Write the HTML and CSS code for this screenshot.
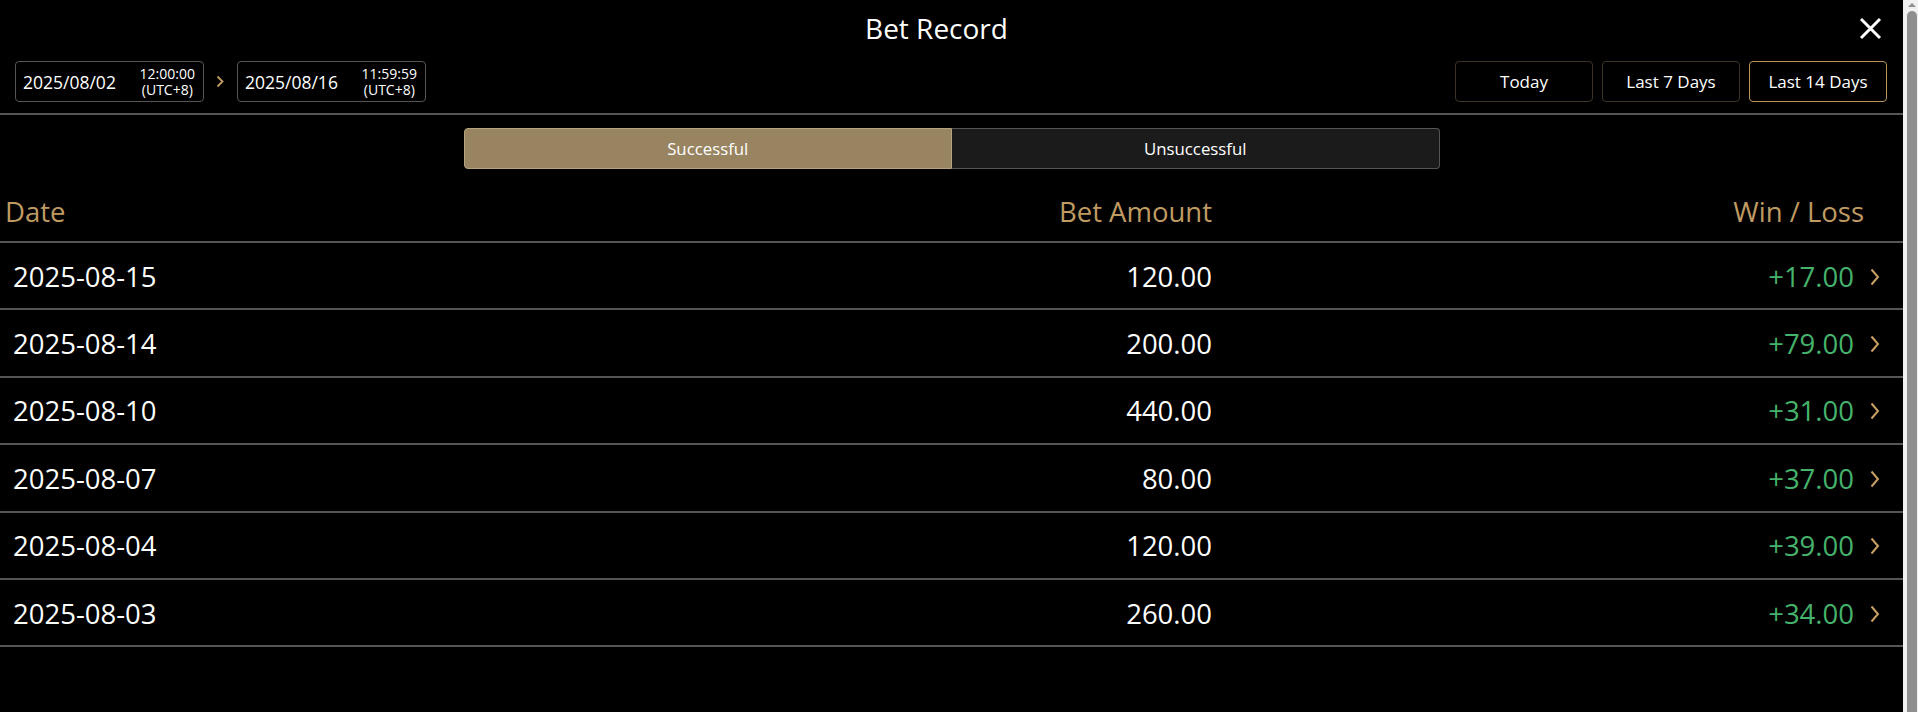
FILE: index.html
```html
<html>
    <head>
        <link rel="stylesheet" href="styles.css">
    </head>
    <body>
        <div class="page">
            <div class="main">
                <div class="titlebar">
                    <div class="title">Bet Record</div>
                    <div class="close">
                        <svg width="23" height="23" viewBox="0 0 23 23">
                            <path d="M2 2 L21 21 M21 2 L2 21" stroke="#fff" stroke-width="3" fill="none"/>
                        </svg>
                    </div>
                </div>

                <div class="filters">
                    <div class="range">
                        <div class="datebox">
                            <span class="day">2025/08/02</span>
                            <span class="time">12:00:00<br>(UTC+8)</span>
                        </div>
                        <svg class="arrow" width="8" height="13" viewBox="0 0 8 13">
                            <path d="M1.5 1.5 L6.5 6.5 L1.5 11.5" stroke="#c29d61" stroke-width="1.8" fill="none"/>
                        </svg>
                        <div class="datebox">
                            <span class="day">2025/08/16</span>
                            <span class="time">11:59:59<br>(UTC+8)</span>
                        </div>
                    </div>
                    <div class="quick">
                        <div class="quick-btn">Today</div>
                        <div class="quick-btn">Last 7 Days</div>
                        <div class="quick-btn active">Last 14 Days</div>
                    </div>
                </div>

                <div class="tabs">
                    <div class="tab selected">Successful</div>
                    <div class="tab">Unsuccessful</div>
                </div>

                <div class="table">
                    <div class="row head">
                        <div>Date</div>
                        <div class="num">Bet Amount</div>
                        <div class="num head-wl">Win / Loss</div>
                    </div>
                    <div class="row">
                        <div>2025-08-15</div>
                        <div class="num">120.00</div>
                        <div class="wl"><span class="win">+17.00</span><svg class="chev" width="10" height="18" viewBox="0 0 10 18"><path d="M1.5 1.5 L8 9 L1.5 16.5" stroke="#c9a063" stroke-width="2" fill="none"/></svg></div>
                    </div>
                    <div class="row">
                        <div>2025-08-14</div>
                        <div class="num">200.00</div>
                        <div class="wl"><span class="win">+79.00</span><svg class="chev" width="10" height="18" viewBox="0 0 10 18"><path d="M1.5 1.5 L8 9 L1.5 16.5" stroke="#c9a063" stroke-width="2" fill="none"/></svg></div>
                    </div>
                    <div class="row">
                        <div>2025-08-10</div>
                        <div class="num">440.00</div>
                        <div class="wl"><span class="win">+31.00</span><svg class="chev" width="10" height="18" viewBox="0 0 10 18"><path d="M1.5 1.5 L8 9 L1.5 16.5" stroke="#c9a063" stroke-width="2" fill="none"/></svg></div>
                    </div>
                    <div class="row">
                        <div>2025-08-07</div>
                        <div class="num">80.00</div>
                        <div class="wl"><span class="win">+37.00</span><svg class="chev" width="10" height="18" viewBox="0 0 10 18"><path d="M1.5 1.5 L8 9 L1.5 16.5" stroke="#c9a063" stroke-width="2" fill="none"/></svg></div>
                    </div>
                    <div class="row">
                        <div>2025-08-04</div>
                        <div class="num">120.00</div>
                        <div class="wl"><span class="win">+39.00</span><svg class="chev" width="10" height="18" viewBox="0 0 10 18"><path d="M1.5 1.5 L8 9 L1.5 16.5" stroke="#c9a063" stroke-width="2" fill="none"/></svg></div>
                    </div>
                    <div class="row">
                        <div>2025-08-03</div>
                        <div class="num">260.00</div>
                        <div class="wl"><span class="win">+34.00</span><svg class="chev" width="10" height="18" viewBox="0 0 10 18"><path d="M1.5 1.5 L8 9 L1.5 16.5" stroke="#c9a063" stroke-width="2" fill="none"/></svg></div>
                    </div>
                </div>
            </div>

            <div class="scrollbar">
                <div class="scroll-up"></div>
                <div class="scroll-thumb"></div>
            </div>
        </div>
    </body>
</html>
```

FILE: styles.css
```css
body {
    background: #000;
    color: #fff;
    font-family: "Open Sans", "Noto Sans", sans-serif;
    margin: 0;
    overflow: hidden;
}
.page {
    display: flex;
    height: 712px;
}
.main {
    flex: 1;
    min-width: 0;
}

/* title */
.titlebar {
    display: flex;
        align-items: center;
    height: 56px;
    padding: 0 21px 0 14px;
}
.title {
    flex: 1;
    font-size: 28px;
    text-align: center;
}
.close {
    display: flex;
}

/* date filters */
.filters {
    border-bottom: 2px solid #555;
    display: flex;
        align-items: center;
        justify-content: space-between;
    padding: 5px 16px 11px 15px;
}
.range {
    display: flex;
        align-items: center;
}
.arrow {
    margin: 0 13px 0 12px;
}
.datebox {
    border: 1px solid #555;
    border-radius: 4px;
    box-sizing: border-box;
    display: flex;
        align-items: center;
        justify-content: space-between;
    height: 41px;
    padding: 0 8px 0 7px;
    width: 189px;
}
.day {
    font-size: 17.5px;
}
.time {
    font-size: 14px;
    line-height: 16px;
    text-align: center;
}
.quick {
    display: flex;
    gap: 9px;
}
.quick-btn {
    border: 1px solid #3d3325;
    border-radius: 4px;
    box-sizing: border-box;
    display: flex;
        align-items: center;
        justify-content: center;
    font-size: 17px;
    height: 41px;
    width: 138px;
}
.quick-btn.active {
    border-color: #b8935a;
}

/* tabs */
.tabs {
    display: flex;
    height: 41px;
    margin: 13px auto 0;
    width: 976px;
}
.tab {
    background: #1b1b1b;
    border: 1px solid #555;
    border-left: none;
    border-radius: 0 4px 4px 0;
    display: flex;
        align-items: center;
        flex: 1;
        justify-content: center;
    font-size: 16.8px;
}
.tab.selected {
    background: #998461;
    border: 1px solid #b5a37f;
    border-radius: 4px 0 0 4px;
}

/* table */
.row {
    border-bottom: 2px solid #555;
    display: grid;
        align-items: center;
        grid-template-columns: 1fr 400px 668px;
    font-size: 27.5px;
    height: 63.4px;
    line-height: 38px;
    padding: 2px 23px 0 13px;
}
.row.head {
    align-items: start;
    box-sizing: border-box;
    color: #bf9b62;
    height: 74px;
    padding: 24px 23px 0 5px;
}
.num {
    text-align: right;
}
.head-wl {
    padding-right: 16px;
}
.wl {
    display: flex;
        align-items: center;
        justify-content: flex-end;
    gap: 16px;
}
.win {
    color: #45b36b;
}
.chev {
    display: block;
}

/* fake scrollbar */
.scrollbar {
    background: #f1f1f1;
    display: flex;
        flex-direction: column;
        align-items: center;
    width: 15px;
}
.scroll-up {
    border-bottom: 4px solid #8f8f8f;
    border-left: 4px solid transparent;
    border-right: 4px solid transparent;
    margin: 3px 0 4px 3px;
    width: 0;
}
.scroll-thumb {
    background: #8f8f8f;
    border-radius: 5px 5px 0 0;
    flex: 1;
    margin-left: 3px;
    width: 10px;
}
```
